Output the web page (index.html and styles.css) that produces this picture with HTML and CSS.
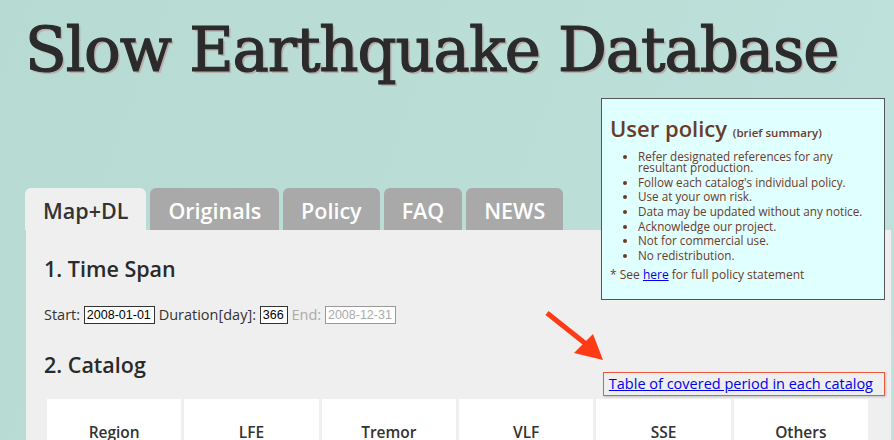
FILE: index.html
```html
<html>
<head>
  <meta charset="UTF-8">
  <title>Slow Earthquake Database</title>
  <link rel="stylesheet" href="styles.css">
</head>
<body>

  <h1 class="site-title">Slow Earthquake Database</h1>

  <div class="policy-box">
    <h2>User policy <small>(brief summary)</small></h2>
    <ul>
      <li>Refer designated references for any resultant production.</li>
      <li>Follow each catalog's individual policy.</li>
      <li>Use at your own risk.</li>
      <li>Data may be updated without any notice.</li>
      <li>Acknowledge our project.</li>
      <li>Not for commercial use.</li>
      <li>No redistribution.</li>
    </ul>
    <p>* See <a href="#">here</a> for full policy statement</p>
  </div>

  <div class="tabs">
    <div class="tab active">Map+DL</div>
    <div class="tab">Originals</div>
    <div class="tab">Policy</div>
    <div class="tab">FAQ</div>
    <div class="tab">NEWS</div>
  </div>

  <div class="panel">
    <h3>1. Time Span</h3>
    <div class="span-row">
      Start: <input type="text" class="date-in" value="2008-01-01">
      Duration[day]: <input type="text" class="num-in" value="366">
      <span class="off">End:</span> <input type="text" class="date-in off-in" value="2008-12-31" disabled>
    </div>

    <div class="catalog-head">
      <h3>2. Catalog</h3>
      <div class="period-link"><a href="#">Table of covered period in each catalog</a></div>
      <!-- pointer arrow -->
      <svg class="arrow" width="70" height="56" viewBox="0 0 70 56">
        <line x1="3" y1="3" x2="42" y2="34" stroke="#ff3a14" stroke-width="5"/>
        <polygon points="59,50 30,43 49,24" fill="#ff3a14"/>
      </svg>
    </div>

    <div class="catalog-grid">
      <div class="cell">Region</div>
      <div class="cell">LFE</div>
      <div class="cell">Tremor</div>
      <div class="cell">VLF</div>
      <div class="cell">SSE</div>
      <div class="cell">Others</div>
    </div>
  </div>

</body>
</html>
```

FILE: styles.css
```css
body {
  margin: 0;
  font-family: "Open Sans", sans-serif;
  background: linear-gradient(110deg, #b7dbd2 0%, #bbded7 60%, #c0e2dd 100%);
  height: 440px;
  overflow: hidden;
}
.site-title {
  font-family: "DejaVu Serif", serif;
  font-weight: normal;
  font-size: 61px;
  color: #2b2b2b;
  -webkit-text-stroke: 1.2px #2b2b2b;
  text-shadow: 2px 2px 1px #b8a9a9;
  margin: 0;
  padding: 14px 0 0 25px;
  height: 174px;
  letter-spacing: -1.1px;
}
.policy-box {
  position: absolute;
  left: 601px;
  top: 98px;
  width: 284px;
  height: 202px;
  background: #e0ffff;
  border: 1px solid #555;
  color: #6b3b28;
  box-sizing: border-box;
  padding: 14px 8px 0 8px;
  z-index: 2;
}
.policy-box h2 {
  margin: 0 0 8px 0;
  font-size: 22px;
  font-weight: 600;
}
.policy-box h2 small {
  font-size: 11.5px;
  font-weight: 600;
}
.policy-box ul {
  margin: 0;
  padding-left: 28px;
  font-size: 11.7px;
  line-height: 11px;
}
.policy-box li {
  margin-bottom: 3.7px;
}
.policy-box p {
  margin: 5px 0 0 0;
  font-size: 12px;
}
.policy-box a {
  color: #0000ee;
}
.tabs {
  display: flex;
  gap: 4px;
  margin-left: 25px;
}
.tab {
  height: 42px;
  line-height: 46px;
  padding: 0 18px;
  background: #a9a9a9;
  color: #fff;
  font-size: 21.5px;
  font-weight: 600;
  border-radius: 6px 6px 0 0;
}
.tab.active {
  background: #efefef;
  color: #333;
}
.panel {
  background: #efefef;
  margin: 0 3px 0 26px;
  padding: 24px 0 0 18px;
  height: 300px;
}
.panel h3 {
  margin: 0;
  font-size: 21.5px;
  font-weight: 600;
  color: #2a2a2a;
}
.span-row {
  margin-top: 22px;
  font-size: 14.5px;
  color: #333;
}
.span-row input {
  font-family: "Liberation Sans", Arial, sans-serif;
  font-size: 12.5px;
  border: 1px solid #333;
  padding: 1px 2px;
  height: 18px;
  box-sizing: border-box;
  background: #fff;
  vertical-align: 1px;
}
.date-in {
  width: 71px;
}
.num-in {
  width: 28px;
}
.off {
  color: #aaa;
}
.span-row .off-in {
  color: #aaa;
  border-color: #999;
  width: 71px;
}
.catalog-head {
  position: relative;
  display: flex;
  justify-content: space-between;
  align-items: flex-end;
  margin-top: 26px;
  padding-right: 6px;
}
.catalog-head h3 {
  align-self: flex-start;
}
.period-link {
  margin-top: 22px;
  border: 1px solid #f05a3c;
  box-shadow: 1px 1px 2px rgba(0, 0, 0, 0.2);
  padding: 1px 11px 2px 5px;
  font-size: 14.5px;
}
.period-link a {
  color: #0000ee;
}
.arrow {
  position: absolute;
  left: 500px;
  top: -40px;
}
.catalog-grid {
  display: grid;
  grid-template-columns: repeat(6, 1fr);
  width: 821px;
  gap: 3px;
  margin: 3px 0 0 3px;
}
.cell {
  background: #fff;
  height: 60px;
  padding-top: 22px;
  box-sizing: border-box;
  text-align: center;
  font-size: 15.5px;
  font-weight: 600;
  color: #333;
}
```
